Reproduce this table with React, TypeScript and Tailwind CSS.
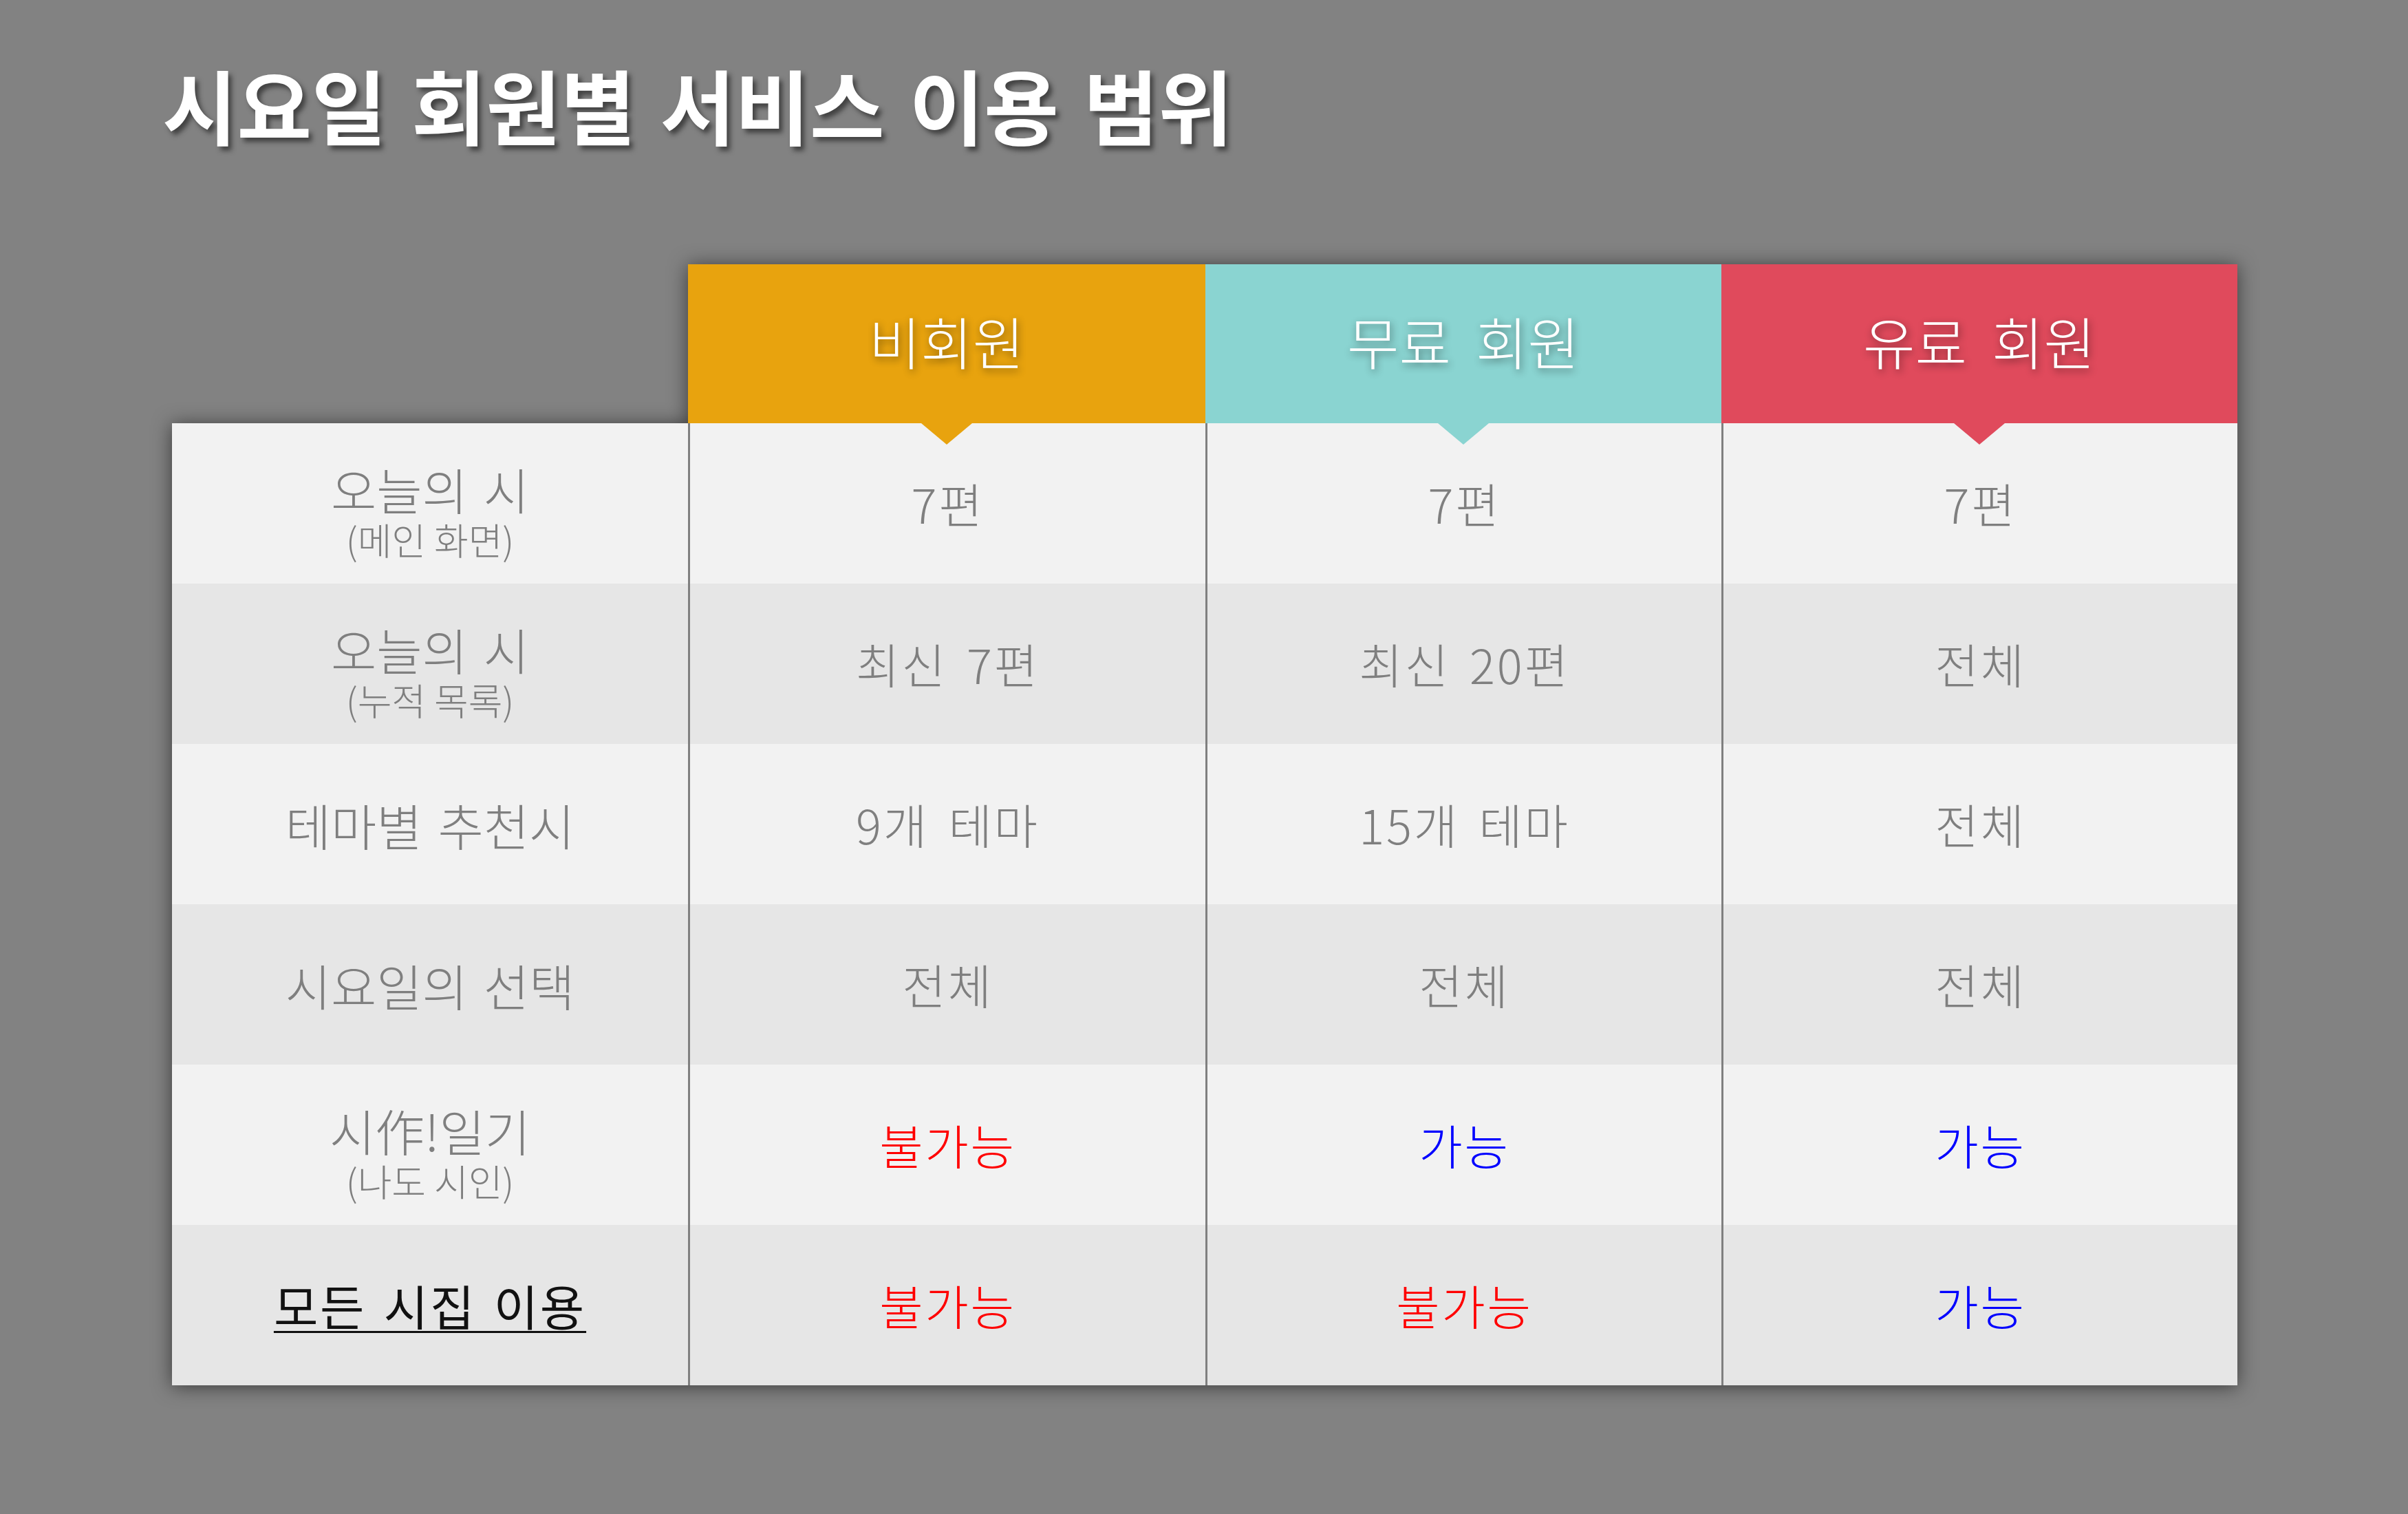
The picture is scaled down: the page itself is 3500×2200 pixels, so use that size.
import React from 'react';

type Tone = 'gray' | 'red' | 'blue';

interface Row {
  label: string;
  sub?: string;
  strong?: boolean;
  cells: [string, Tone][];
}

const rows: Row[] = [
  { label: '오늘의 시', sub: '(메인 화면)', cells: [['7편', 'gray'], ['7편', 'gray'], ['7편', 'gray']] },
  { label: '오늘의 시', sub: '(누적 목록)', cells: [['최신 7편', 'gray'], ['최신 20편', 'gray'], ['전체', 'gray']] },
  { label: '테마별 추천시', cells: [['9개 테마', 'gray'], ['15개 테마', 'gray'], ['전체', 'gray']] },
  { label: '시요일의 선택', cells: [['전체', 'gray'], ['전체', 'gray'], ['전체', 'gray']] },
  { label: '시作!일기', sub: '(나도 시인)', cells: [['불가능', 'red'], ['가능', 'blue'], ['가능', 'blue']] },
  { label: '모든 시집 이용', strong: true, cells: [['불가능', 'red'], ['불가능', 'red'], ['가능', 'blue']] },
];

const toneClass: Record<Tone, string> = {
  gray: 'text-[#7f7f7f]',
  red: 'text-[#ff0000]',
  blue: 'text-[#0000ff]',
};

const headers = [
  { title: '비회원', bg: 'bg-[#e8a30e]', tip: 'border-t-[#e8a30e]', w: 'w-[752px]' },
  { title: '무료 회원', bg: 'bg-[#8ad4d1]', tip: 'border-t-[#8ad4d1]', w: 'w-[750px]' },
  { title: '유료 회원', bg: 'bg-[#e04a5c]', tip: 'border-t-[#e04a5c]', w: 'w-[750px]' },
];

const colW = ['w-[750px]', 'w-[752px]', 'w-[750px]', 'w-[750px]'];

export default function App() {
  return (
    <div className='w-[3500px] h-[2200px] bg-[#828282] [font-family:"Noto_Sans_CJK_KR","Noto_Sans",sans-serif] overflow-hidden'>
      {/* 제목 */}
      <h1 className="pl-[236px] pt-[92px] h-[384px] text-[118px] leading-none font-bold text-white [word-spacing:0.08em] [text-shadow:5px_6px_7px_rgba(0,0,0,0.5)]">
        시요일 회원별 서비스 이용 범위
      </h1>

      {/* 표 */}
      <div className="ml-[250px] w-[3002px] drop-shadow-[0_2px_14px_rgba(0,0,0,0.55)]">
        <div className="relative z-10 flex">
          <div className="w-[750px]" />
          {headers.map(h => (
            <div key={h.title} className={`relative ${h.w} h-[231px] ${h.bg} flex items-center justify-center`}>
              <span className="pb-[10px] text-[82px] leading-none font-light text-white [word-spacing:0.22em] [text-shadow:2px_4px_12px_rgba(0,0,0,0.45)]">
                {h.title}
              </span>
              <div className={`absolute top-full left-1/2 -translate-x-1/2 w-0 h-0 border-l-[37px] border-r-[37px] border-t-[31px] border-l-transparent border-r-transparent ${h.tip}`} />
            </div>
          ))}
        </div>

        {rows.map((r, i) => (
          <div key={i} className={`flex h-[233px] ${i % 2 === 0 ? 'bg-[#f2f2f2]' : 'bg-[#e6e6e6]'}`}>
            <div className={`${colW[0]} flex flex-col items-center justify-center ${r.sub ? 'pt-[22px]' : ''}`}>
              {r.strong ? (
                <span className="text-[70px] leading-[1.1] font-normal text-[#111] tracking-[0.04em] [word-spacing:0.1em] underline decoration-[3px] underline-offset-[7px]">
                  {r.label}
                </span>
              ) : (
                <>
                  <span className="text-[72px] leading-[1.05] font-light text-[#7f7f7f] [word-spacing:0.1em]">{r.label}</span>
                  {r.sub && <span className="mt-[6px] text-[54px] leading-[1.1] font-light text-[#7f7f7f]">{r.sub}</span>}
                </>
              )}
            </div>
            {r.cells.map(([text, tone], j) => (
              <div key={j} className={`${colW[j + 1]} border-l-[3px] border-[#808080] flex items-center justify-center`}>
                <span className={`text-[69px] leading-none font-light tracking-[0.04em] [word-spacing:0.15em] ${toneClass[tone]}`}>{text}</span>
              </div>
            ))}
          </div>
        ))}
      </div>
    </div>
  );
}
